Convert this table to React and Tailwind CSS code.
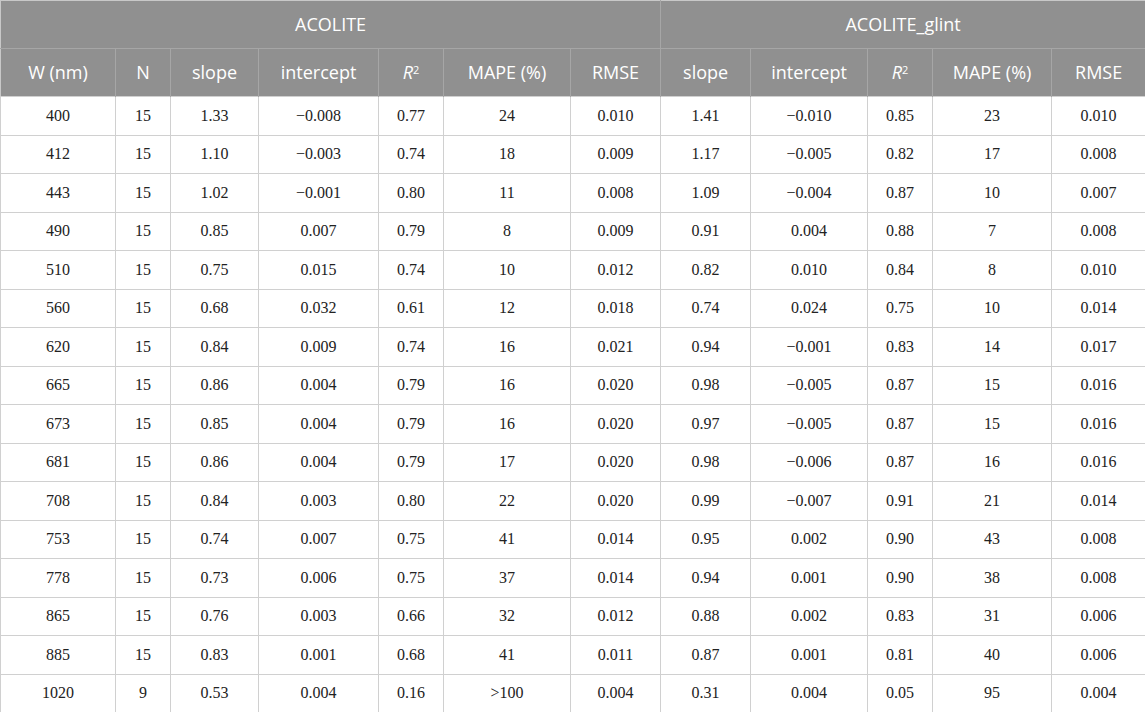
import React from "react";

const widths = [115, 55, 88, 120, 65, 127, 90, 90, 117, 65, 119, 94];

const rows = [
  ["400", "15", "1.33", "−0.008", "0.77", "24", "0.010", "1.41", "−0.010", "0.85", "23", "0.010"],
  ["412", "15", "1.10", "−0.003", "0.74", "18", "0.009", "1.17", "−0.005", "0.82", "17", "0.008"],
  ["443", "15", "1.02", "−0.001", "0.80", "11", "0.008", "1.09", "−0.004", "0.87", "10", "0.007"],
  ["490", "15", "0.85", "0.007", "0.79", "8", "0.009", "0.91", "0.004", "0.88", "7", "0.008"],
  ["510", "15", "0.75", "0.015", "0.74", "10", "0.012", "0.82", "0.010", "0.84", "8", "0.010"],
  ["560", "15", "0.68", "0.032", "0.61", "12", "0.018", "0.74", "0.024", "0.75", "10", "0.014"],
  ["620", "15", "0.84", "0.009", "0.74", "16", "0.021", "0.94", "−0.001", "0.83", "14", "0.017"],
  ["665", "15", "0.86", "0.004", "0.79", "16", "0.020", "0.98", "−0.005", "0.87", "15", "0.016"],
  ["673", "15", "0.85", "0.004", "0.79", "16", "0.020", "0.97", "−0.005", "0.87", "15", "0.016"],
  ["681", "15", "0.86", "0.004", "0.79", "17", "0.020", "0.98", "−0.006", "0.87", "16", "0.016"],
  ["708", "15", "0.84", "0.003", "0.80", "22", "0.020", "0.99", "−0.007", "0.91", "21", "0.014"],
  ["753", "15", "0.74", "0.007", "0.75", "41", "0.014", "0.95", "0.002", "0.90", "43", "0.008"],
  ["778", "15", "0.73", "0.006", "0.75", "37", "0.014", "0.94", "0.001", "0.90", "38", "0.008"],
  ["865", "15", "0.76", "0.003", "0.66", "32", "0.012", "0.88", "0.002", "0.83", "31", "0.006"],
  ["885", "15", "0.83", "0.001", "0.68", "41", "0.011", "0.87", "0.001", "0.81", "40", "0.006"],
  ["1020", "9", "0.53", "0.004", "0.16", ">100", "0.004", "0.31", "0.004", "0.05", "95", "0.004"],
];

const R2 = () => (
  <span>
    <i>R</i>
    <sup className="text-[11px]">2</sup>
  </span>
);

const heads = ["W (nm)", "N", "slope", "intercept", <R2 key="a" />, "MAPE (%)", "RMSE", "slope", "intercept", <R2 key="b" />, "MAPE (%)", "RMSE"];

export default function App() {
  return (
    <div className="w-[1145px] h-[712px] bg-white overflow-hidden">
      <table className="table-fixed border-collapse w-[1145px] border border-[#c8c8c8]">
        <colgroup>
          {widths.map((w, i) => (
            <col key={i} style={{ width: w }} />
          ))}
        </colgroup>
        <thead className="bg-[#909090] text-white text-[18px] font-[family-name:'Open_Sans',sans-serif]">
          <tr className="h-[48px]">
            <th colSpan={7} className="font-normal text-center border-r border-b border-[#a6a6a6]">ACOLITE</th>
            <th colSpan={5} className="font-normal text-center border-b border-[#a6a6a6]">ACOLITE_glint</th>
          </tr>
          <tr className="h-[48px]">
            {heads.map((h, i) => (
              <th key={i} className="font-normal text-center border-r border-[#a6a6a6] last:border-r-0">
                {h}
              </th>
            ))}
          </tr>
        </thead>
        <tbody>
          {rows.map((r, ri) => (
            <tr key={ri} className="h-[38.5px]">
              {r.map((c, ci) => (
                <td
                  key={ci}
                  className="text-center border border-[#d0d0d0] p-0 font-['Liberation_Serif','Times_New_Roman',serif] text-[16px] text-[#222]"
                >
                  {c}
                </td>
              ))}
            </tr>
          ))}
        </tbody>
      </table>
    </div>
  );
}
